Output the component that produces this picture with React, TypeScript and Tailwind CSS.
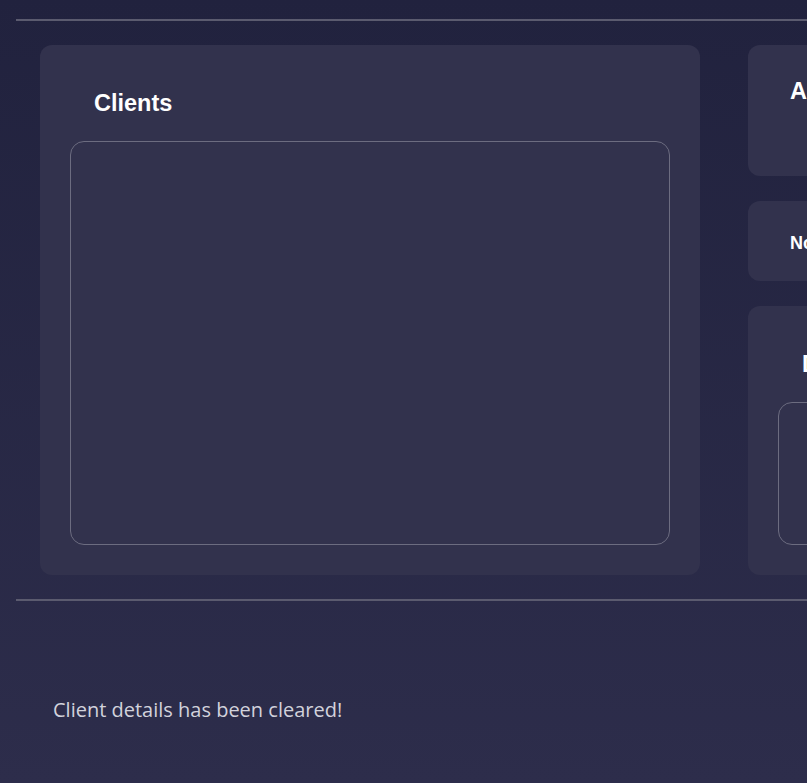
export default function App() {
  return (
    <div className="min-h-screen w-full overflow-hidden bg-gradient-to-b from-[#21223e] to-[#2d2d4b] pl-4 pt-[19px]" style={{ fontFamily: "Arial, 'Liberation Sans', sans-serif" }}>
      <div className="h-[2px] w-[1200px] bg-[#5b5b6f]" />

      <div className="flex gap-[48px] pl-6 pt-6">
        {/* clients */}
        <section className="flex h-[530px] w-[660px] shrink-0 flex-col rounded-xl bg-[#32324d] px-[30px]">
          <h2 className="pl-6 pt-[45px] text-[23.5px] font-bold leading-[26px] text-white">Clients</h2>
          <div className="mt-[25px] h-[404px] rounded-[14px] border border-[#6c6c80]" />
        </section>

        {/* right column */}
        <div className="flex w-[320px] shrink-0 flex-col gap-[25px]">
          <section className="h-[131px] rounded-xl bg-[#32324d] pl-[42px] pt-[33px]">
            <h2 className="text-[23.5px] font-bold leading-[26px] text-white">Account</h2>
          </section>
          <section className="h-[80px] rounded-xl bg-[#32324d] pl-[42px] pt-[31px]">
            <h3 className="text-[18px] font-bold leading-[22px] text-white">Notifications</h3>
          </section>
          <section className="h-[269px] rounded-xl bg-[#32324d] px-[30px]">
            <h2 className="pl-6 pt-[45px] text-[23.5px] font-bold leading-[26px] text-white">Details</h2>
            <div className="mt-[25px] h-[143px] rounded-[14px] border border-[#6c6c80]" />
          </section>
        </div>
      </div>

      <div className="mt-[24px] h-[2px] w-[1200px] bg-[#5b5b6f]" />

      <p className="pl-[37px] pt-[94px] text-[20px] text-[#d2d2dc]" style={{ fontFamily: "'Open Sans', 'Noto Sans', sans-serif" }}>
        Client details has been cleared!
      </p>
    </div>
  );
}
